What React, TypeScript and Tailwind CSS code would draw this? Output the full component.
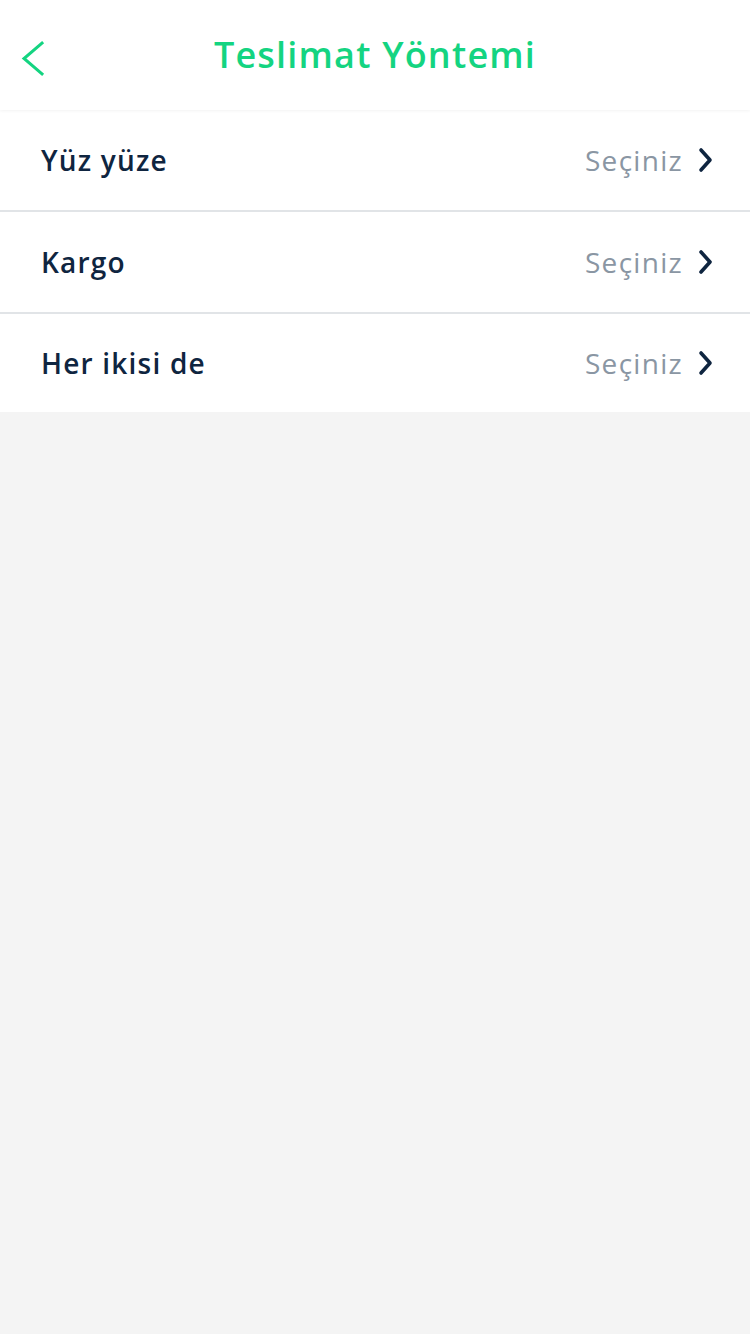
const options = ['Yüz yüze', 'Kargo', 'Her ikisi de'];

function BackIcon() {
  return (
    <svg width="24" height="37" viewBox="0 0 24 37" fill="none">
      <path d="M21 3 L3 18.5 L21 34" stroke="#14d481" strokeWidth="3" strokeLinecap="square" />
    </svg>
  );
}

function RowChevron() {
  return (
    <svg width="16" height="26" viewBox="0 0 16 26" fill="none">
      <path d="M3 3 L12 13 L3 23" stroke="#0f2540" strokeWidth="3.6" strokeLinecap="round" strokeLinejoin="round" />
    </svg>
  );
}

export default function App() {
  return (
    <div className="min-h-[1334px] bg-[#f4f4f4] font-['Open_Sans',sans-serif]">
      <header className="relative z-10 flex h-[110px] items-center justify-center bg-white shadow-[0_1px_3px_rgba(0,0,0,0.05)]">
        <button className="absolute left-[21px] top-[40px]">
          <BackIcon />
        </button>
        <h1 className="text-[36px] font-semibold tracking-[1.2px] text-[#14d481]">
          Teslimat Yöntemi
        </h1>
      </header>

      <div className="bg-white">
        {options.map((label, i) => (
          <div
            key={label}
            className={
              i < options.length - 1
                ? 'flex h-[102px] items-center justify-between border-b-2 border-[#e1e4e7] pl-[41px] pr-[36px]'
                : 'flex h-[98px] items-center justify-between pl-[41px] pr-[36px]'
            }
          >
            <span className="text-[28px] font-semibold tracking-[1.2px] text-[#0f2540]">{label}</span>
            <div className="flex items-center gap-[15px]">
              <span className="text-[28px] tracking-[1.3px] text-[#8a96a3]">Seçiniz</span>
              <RowChevron />
            </div>
          </div>
        ))}
      </div>
    </div>
  );
}
